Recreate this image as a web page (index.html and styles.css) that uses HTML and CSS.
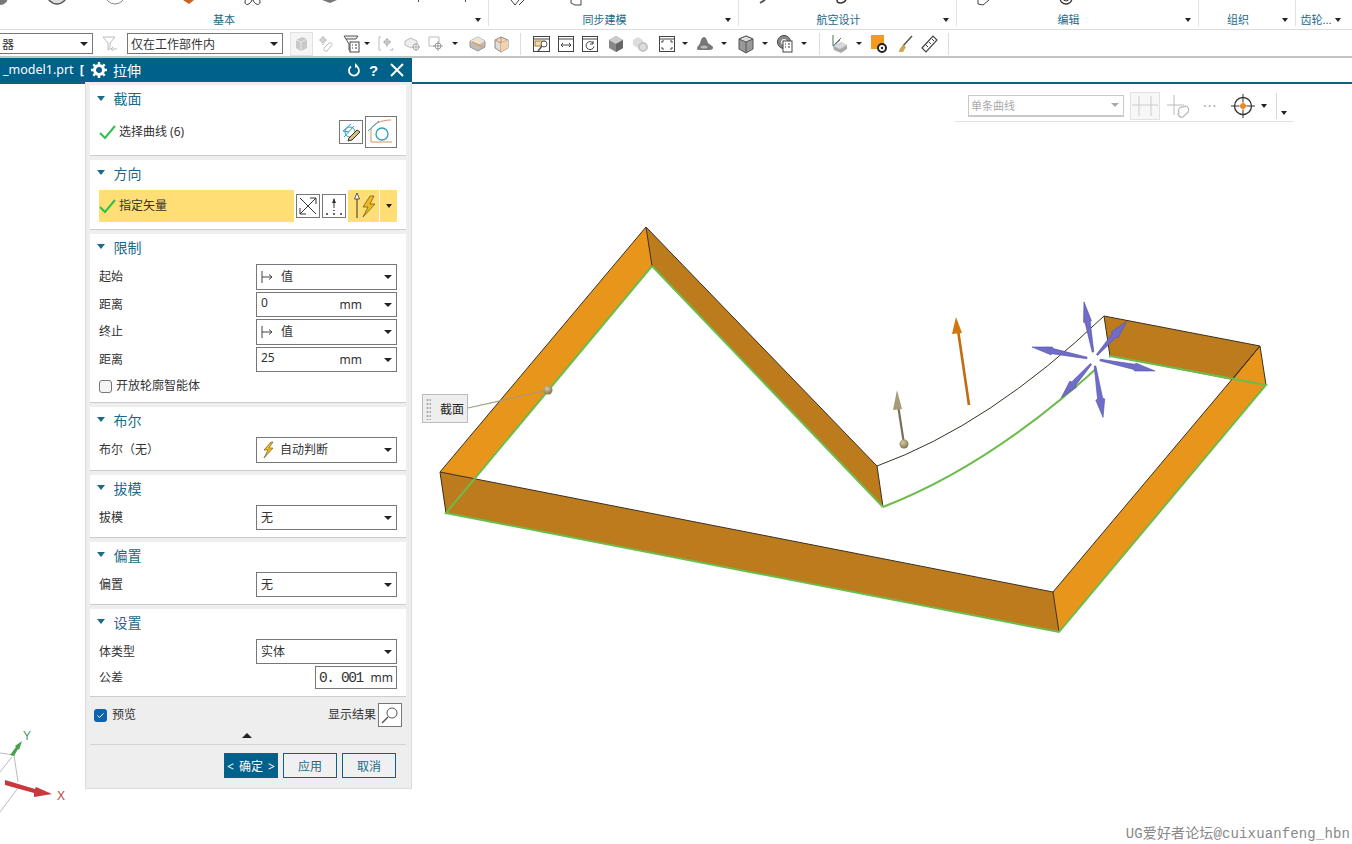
FILE: index.html
```html
<!DOCTYPE html>
<html lang="zh-CN">
<head>
<meta charset="utf-8">
<title>拉伸</title>
<link rel="stylesheet" href="styles.css">
</head>
<body>
<div class="app">
  <header class="ribbon">
    <section class="rgroup g1">
      <svg class="strip" width="488" height="8">
        <circle cx="0" cy="-3" r="8" fill="#777"/><circle cx="57" cy="-6" r="10" fill="#ddd" stroke="#555" stroke-width="1.4"/>
        <circle cx="115" cy="-6" r="10" fill="#fff" stroke="#888"/><path d="M183 0h11l-5 4z" fill="#c8641e"/>
        <path d="M252 0c-2 5-7 6-7 2 0-1 0-2 1-2M253 0c2 5 7 6 7 2 0-1 0-2-1-2" fill="none" stroke="#333"/>
        <path d="M322 0h15l-7 3z" fill="#777"/><path d="M418.500 0v2M465.500 0v2" stroke="#555"/>
      </svg>
      <div class="rlabel"><span>基本</span><i class="tri"></i></div>
    </section>
    <section class="rgroup g2">
      <svg class="strip" width="249" height="8">
        <path d="M22 0l4 5 4-5M30 5l5-5" fill="none" stroke="#444"/><path d="M82 0v3l4 2h6V0" fill="none" stroke="#444"/>
      </svg>
      <div class="rlabel"><span>同步建模</span><i class="tri"></i></div>
    </section>
    <section class="rgroup g3">
      <svg class="strip" width="217" height="8">
        <path d="M21 3l5-3" stroke="#555" stroke-width="2"/><path d="M98 0c0 4 6 4 9 0" fill="none" stroke="#333" stroke-width="1.500"/>
      </svg>
      <div class="rlabel"><span>航空设计</span><i class="tri"></i></div>
    </section>
    <section class="rgroup g4">
      <svg class="strip" width="242" height="8">
        <path d="M21 0v4l5 1 6-5" fill="none" stroke="#444"/><circle cx="109" cy="-2" r="6" fill="none" stroke="#333" stroke-width="1.300"/><circle cx="109" cy="-2" r="3" fill="none" stroke="#333"/>
      </svg>
      <div class="rlabel"><span>编辑</span><i class="tri"></i></div>
    </section>
    <section class="rgroup g5">
      <div class="rlabel labeled"><span>组织</span><i class="tri"></i></div>
    </section>
    <section class="rgroup g6">
      <div class="rlabel labeled"><span>齿轮...</span><i class="tri"></i></div>
    </section>
  </header>

  <nav class="toolbar">
    <div class="combo c1"><span class="cut">器</span><i class="tri"></i></div>
    <svg class="ic m9" width="16" height="20"><path d="M1 3h12l-5 6v6l-2 1V9z" fill="none" stroke="#bbb"/><path d="M10 15h5M11 13l-2 2 2 2" fill="none" stroke="#bbb"/></svg>
    <div class="combo c2"><span>仅在工作部件内</span><i class="tri"></i></div>
    <div class="dis m7"><svg width="15" height="18"><path d="M2 5l6-3 5 2v9l-6 3-5-3z" fill="#c8c8c8"/><path d="M2 5l5 2 6-3M7 7v9" fill="none" stroke="#e8e8e8"/></svg></div>
    <svg class="ic m5" width="16" height="20"><path d="M5 2v9M1 6h8" stroke="#bbb"/><circle cx="5" cy="6" r="2.500" fill="none" stroke="#bbb"/><path d="M7 13l4-4c3-1 4 2 2 3l-4 5c-3 1-4-2-2-4z" fill="none" stroke="#bbb"/></svg>
    <svg class="ic m9" width="17" height="20"><path d="M1 2h14l-2 3H3z M3 5l3 5v6h2" fill="#eee" stroke="#555"/><rect x="7" y="8" width="9" height="10" fill="#fff" stroke="#444"/><path d="M9 11h1M12 11h2M9 14h1M12 14h2" stroke="#333"/></svg>
    <i class="tri m4"></i>
    <svg class="ic m8" width="16" height="20"><path d="M3 3H1v13h2" fill="none" stroke="#bbb"/><path d="M9 4v9M5 8h8" stroke="#aaa"/><circle cx="9" cy="8" r="2.500" fill="none" stroke="#aaa"/><path d="M12 16h3l-1-2" fill="none" stroke="#bbb"/></svg>
    <svg class="ic m10" width="16" height="20"><path d="M1 7l6-3 6 3v4l-6 3-6-3z" fill="#eee" stroke="#bbb"/><circle cx="12" cy="13" r="3" fill="#fff" stroke="#aaa"/><path d="M12 9v8M8 13h8" stroke="#aaa"/></svg>
    <svg class="ic m8" width="17" height="20"><path d="M1 3h10v9H1z" fill="none" stroke="#bbb"/><circle cx="10" cy="12" r="3" fill="#fff" stroke="#999"/><path d="M10 7v10M5 12h10" stroke="#999"/></svg>
    <i class="tri m7"></i>
    <svg class="ic m11" width="17" height="20"><path d="M1 7l8-4 7 4v6l-7 4-8-4z" fill="#bdbdbd" stroke="#999"/><path d="M1 7l8 4 7-4-7-4z" fill="#ece4d6"/><path d="M3 8l11 5" stroke="#dda060" stroke-width="1.500"/></svg>
    <svg class="ic m7" width="17" height="20"><path d="M2 6l6-3 7 3v8l-7 4-6-4z" fill="#ddd" stroke="#888"/><path d="M8 3v15M2 6l6 3 7-3" fill="none" stroke="#d98a3a"/><path d="M8 9l7-3v8l-7 4z" fill="#f0d2b0"/></svg>
    <i class="sep m10"></i>
    <svg class="ic m12" width="17" height="20"><rect x=".5" y="2.500" width="16" height="15" fill="#fff" stroke="#444"/><path d="M1 5h15" stroke="#444"/><rect x="2" y="7" width="10" height="5" fill="#f4dca8" stroke="#a87a38"/><circle cx="11" cy="10" r="3" fill="#fff" stroke="#555"/><path d="M9 12l-4 5" stroke="#555" stroke-width="1.500"/></svg>
    <svg class="ic m8" width="16" height="20"><rect x=".5" y="2.500" width="15" height="15" fill="#fff" stroke="#444"/><path d="M1 5h14M3 11h10M5 9l-2 2 2 2M11 9l2 2-2 2" fill="none" stroke="#444"/></svg>
    <svg class="ic m8" width="16" height="20"><rect x=".5" y="2.500" width="15" height="15" fill="#fff" stroke="#444"/><path d="M1 5h14" stroke="#444"/><path d="M11.500 9.500a4 4 0 1 0 .5 3M11 7v3H8" fill="none" stroke="#444"/></svg>
    <svg class="ic m10" width="16" height="20"><path d="M1 6l7-4 7 4v8l-7 4-7-4z" fill="#888"/><path d="M1 6l7-4 7 4-7 4z" fill="#ccc"/><path d="M8 10v8l7-4V6z" fill="#666"/></svg>
    <svg class="ic m8" width="16" height="20"><path d="M1 6l5-3 5 3v5l-5 3-5-3z" fill="#ddd"/><circle cx="11" cy="13" r="4" fill="#ddd" stroke="#c4c4c4" stroke-width="2"/></svg>
    <svg class="ic m11" width="16" height="20"><rect x=".5" y="2.500" width="15" height="15" fill="#fff" stroke="#444"/><path d="M1 5h14M3 9V7h2M13 9V7h-2M3 13v2h2M13 13v2h-2" fill="none" stroke="#444"/></svg>
    <i class="tri m7"></i>
    <svg class="ic m8" width="18" height="20"><path d="M1 15c0-3 2-3 3-6 1-4 2-6 4-6 2 0 3 3 4 6l4 3c2 1 1 4-2 4H3c-2 0-2-1-2-1z" fill="#777"/><ellipse cx="8" cy="13" rx="3.500" ry="1.500" fill="#bbb"/></svg>
    <i class="tri m7"></i>
    <svg class="ic m11" width="16" height="20"><path d="M1 5l7-3 7 3v10l-7 4-7-4z" fill="#999" stroke="#555"/><path d="M1 5l7 3 7-3-7-3z" fill="#ddd" stroke="#555"/><path d="M8 8v11" stroke="#555"/></svg>
    <i class="tri m8"></i>
    <svg class="ic m9" width="16" height="20"><circle cx="7" cy="8" r="6.500" fill="#888" stroke="#444"/><circle cx="7" cy="8" r="3" fill="#eee"/><rect x="6" y="7" width="9" height="11" fill="#fff" stroke="#444"/><path d="M8 10h1M11 10h2M8 13h1M11 13h2" stroke="#333"/></svg>
    <i class="tri m8"></i>
    <i class="sep m12"></i>
    <svg class="ic m11" width="17" height="20"><path d="M2 12l8-4 6 3v4l-6 4-7-3z" fill="#aaa"/><path d="M2 12l8-4 6 3-7 4z" fill="#d8d8d8"/><path d="M2 1v11" stroke="#3a7d44"/><path d="M2 12L10 4" stroke="#c43a3a"/><path d="M2 12l7-6" stroke="#3a7bc8"/></svg>
    <i class="tri m8"></i>
    <svg class="ic m9" width="17" height="20"><rect x="0" y="1" width="13" height="14" fill="#f39a1f"/><circle cx="11" cy="14" r="4" fill="#fff" stroke="#222" stroke-width="2"/><circle cx="11" cy="14" r="1.200" fill="#222"/></svg>
    <svg class="ic m9" width="16" height="20"><path d="M15 2L6 12" stroke="#555" stroke-width="1.500"/><path d="M6 11l3 2-3 5H2c0-3 2-5 4-7z" fill="#c9a94a"/></svg>
    <svg class="ic m8" width="17" height="20"><path d="M1 14L12 2l4 4L5 18z" fill="#fff" stroke="#444" stroke-width="1.200"/><path d="M5 11l2 2M8 8l2 2M11 5l2 2" stroke="#444"/></svg>
    <i class="sep m10"></i>
  </nav>

  <div class="tabband">
    <div class="tab"><span>_model1.prt</span><b class="tabclip">[</b></div>
  </div>

  <main class="stage">
    <svg class="scene" viewBox="0 84 1352 760" width="1352" height="760">
      <defs>
        <radialGradient id="ball" cx="40%" cy="35%" r="70%"><stop offset="0" stop-color="#d6cba8"/><stop offset="1" stop-color="#7d7049"/></radialGradient>
      </defs>
      <polygon class="face-l" points="646,227 652,266 446,513 440,472"/>
      <polygon class="face-d" points="646,227 877,466 883,507 652,266"/>
      <polygon class="face-d" points="440,472 1053,592 1059,632 446,513"/>
      <polygon class="face-l" points="1053,592 1260,346 1266,385 1059,632"/>
      <polygon class="face-d" points="1104,316 1260,346 1232,380 1110,356"/>
      <path class="edge" d="M646 227L440 472L1053 592L1260 346L1104 316M646 227L877 466M646 227L652 266M440 472L446 513M1053 592L1059 632M1260 346L1266 385M1260 346L1232 380M877 466L883 507M1104 316L1110 356M877 466Q990 425 1104 316"/>
      <path class="green" d="M652 266L446 513L1059 632L1266 385L1110 356M883 507L652 266M883 507Q995 464 1110 356"/>
      <circle cx="1098" cy="358" r="11" fill="#fff"/>

      <g class="a-tan"><path d="M904 444L898 405" stroke="#77705c" stroke-width="2.200"/><polygon points="897,390 902,409 893,410"/></g>
      <circle cx="904" cy="444" r="4.500" fill="url(#ball)"/>
      <g class="a-orange"><path d="M969 405L958 330" stroke="#c46a10" stroke-width="2.600"/><polygon points="956,317 962,333 952,334"/></g>

      <g class="a-blue">
        <polygon transform="translate(1093 352) rotate(-100.200)" points="0,-.8 30,-2.600 31,-4 51,0 31,4 30,2.600 0,.8"/>
        <polygon transform="translate(1095 366) rotate(81.100)" points="0,-.8 33,-2.600 34,-4.500 52,0 34,4.500 33,2.600 0,.8"/>
        <polygon transform="translate(1087 358) rotate(191.300)" points="0,-.8 35,-2.600 36,-4 56,0 36,4 35,2.600 0,.8"/>
        <polygon transform="translate(1100 360) rotate(11.300)" points="0,-.8 35,-2.600 36,-4 56,0 36,4 35,2.600 0,.8"/>
        <polygon transform="translate(1097 355) rotate(-48.600)" points="0,-.8 26,-2.600 27,-4.500 45,0 27,4.500 26,2.600 0,.8"/>
        <polygon transform="translate(1091 364) rotate(131.400)" points="0,-.8 26,-2.600 27,-4.500 45,0 27,4.500 26,2.600 0,.8"/>
      </g>

      <path d="M468 408L548 390" stroke="#a09a7c" stroke-width="1.200"/>
      <circle cx="548" cy="390" r="4.500" fill="url(#ball)"/>

      <path d="M0 753L14 755L18 782M18 788L0 812M12 757L0 772" fill="none" stroke="#bbb"/>
      <polygon points="22,741 15,746 16,747 10,755 14,756 18,749 19,750" fill="#45a34f"/>
      <polygon points="5,780 5,785 34,793 34,797 52,794 36,787 35,789" fill="#c8383c"/>
      <text class="ax-y" x="23" y="740">Y</text>
      <text class="ax-x" x="57" y="800">X</text>
    </svg>

    <div class="callout"><i class="grip"></i><span>截面</span></div>

    <div class="snapbar">
      <div class="snapsel"><span>单条曲线</span><i class="tri tri-grey"></i></div>
      <div class="snapon"><svg width="30" height="28"><path d="M9 4v20M21 4v20M2 13h26" stroke="#ccc"/></svg></div>
      <svg class="snapic" width="26" height="26"><path d="M9 2v20M2 12h17" stroke="#bbb"/><path d="M14 20a4 4 0 0 1 4-6l3-1a4 4 0 0 1 2 6l-5 5a4 4 0 0 1-5-3z" fill="none" stroke="#bbb" stroke-width="1.300"/></svg>
      <span class="snapdots">···</span>
      <svg class="snapic target" width="24" height="24"><circle cx="12" cy="12" r="8.500" fill="#fff" stroke="#333" stroke-width="1.300"/><path d="M12 0v8M12 16v8M0 12h8M16 12h8" stroke="#333"/><path d="M12 8l4 4-4 4-4-4z" fill="#e88a2c"/></svg>
      <i class="tri"></i>
      <i class="sep snapsep"></i>
      <i class="tri snaptail"></i>
    </div>

    <div class="wmark">UG爱好者论坛@cuixuanfeng_hbn</div>
  </main>

  <aside class="dialog">
    <div class="dtitle">
      <svg width="16" height="16"><circle cx="8" cy="8" r="4.500" fill="none" stroke="#fff" stroke-width="3"/><path d="M8 0v3M8 13v3M0 8h3M13 8h3M2.300 2.300l2 2M11.700 11.700l2 2M13.700 2.300l-2 2M4.300 11.700l-2 2" stroke="#fff" stroke-width="2.400"/></svg>
      <span class="dname">拉伸</span>
      <svg class="dreset" width="14" height="14"><path d="M4 3.500a5 5 0 1 0 5-.5" fill="none" stroke="#fff" stroke-width="1.800"/><path d="M8 0v5l3-2z" fill="#fff"/></svg>
      <span class="dhelp">?</span>
      <svg class="dclose" width="14" height="14"><path d="M1 1l12 12M13 1L1 13" stroke="#fff" stroke-width="2"/></svg>
    </div>

    <section class="panel p71">
      <h3 class="phead"><i class="tri tri-blue"></i>截面</h3>
      <div class="row r34">
        <svg class="check" width="17" height="15"><path d="M1 8l5 5L16 1" fill="none" stroke="#2fc04a" stroke-width="2"/></svg>
        <span class="rtext">选择曲线 (6)</span>
        <button class="ib ib24 push"><svg width="22" height="22"><path d="M11 3L3 10l6 1M4 16l10-11" fill="none" stroke="#29a0c0"/><circle cx="10" cy="11" r="5" fill="none" stroke="#29a0c0"/><path d="M9 17l8-8 3 2-8 8-4 1z" fill="#d8c27a" stroke="#333"/></svg></button>
        <button class="ib ib32"><svg width="30" height="30"><path d="M5 25V12c2-5 10-9 20-9" fill="none" stroke="#d8925c"/><path d="M5 25h21" stroke="#d8925c"/><path d="M2 14l11-10" stroke="#29a0c0"/><circle cx="16" cy="17" r="6" fill="none" stroke="#29a0c0" stroke-width="1.300"/></svg></button>
      </div>
    </section>

    <section class="panel p70">
      <h3 class="phead"><i class="tri tri-blue"></i>方向</h3>
      <div class="row r32">
        <div class="vec">
          <svg class="check" width="17" height="15"><path d="M1 8l5 5L16 1" fill="none" stroke="#2fc04a" stroke-width="2"/></svg>
          <span class="rtext">指定矢量</span>
        </div>
        <button class="ib ib24 vb"><svg width="22" height="22"><path d="M3 19L19 3M3 3l16 16M19 3h-6M19 3v6M3 19h6M3 19v-6" fill="none" stroke="#333"/></svg></button>
        <button class="ib ib24 vb"><svg width="22" height="22"><path d="M11 4v9" stroke="#333"/><path d="M11 3l2 5H9z" fill="#333"/><path d="M3 19h2M10 19h2M17 19h2M11 15v1" stroke="#333" stroke-width="1.500"/></svg></button>
        <div class="vsplit">
          <div class="vmain"><svg width="30" height="32"><path d="M9 8v20" stroke="#333"/><path d="M9 3l2.500 6h-5z" fill="#fff" stroke="#333" stroke-width=".8"/><path d="M22 6l-7 11h5l-5 10 12-13h-5l4-8z" fill="#f2b81e" stroke="#6a6030" stroke-width=".8"/></svg></div>
          <div class="vdrop"><i class="tri"></i></div>
        </div>
      </div>
    </section>

    <section class="panel p170">
      <h3 class="phead"><i class="tri tri-blue"></i>限制</h3>
      <div class="row r26"><label>起始</label><div class="sel"><svg class="limit" width="14" height="14"><path d="M1 1v12M1 7h10M8 4.500L11 7l-3 2.500" fill="none" stroke="#444"/></svg><span class="grow">值</span><i class="tri"></i></div></div>
      <div class="row r25"><label>距离</label><div class="sel"><span class="grow up">0</span><span class="unit">mm</span><i class="tri"></i></div></div>
      <div class="row r26"><label>终止</label><div class="sel"><svg class="limit" width="14" height="14"><path d="M1 1v12M1 7h10M8 4.500L11 7l-3 2.500" fill="none" stroke="#444"/></svg><span class="grow">值</span><i class="tri"></i></div></div>
      <div class="row r25"><label>距离</label><div class="sel"><span class="grow up">25</span><span class="unit">mm</span><i class="tri"></i></div></div>
      <div class="row r24 chk"><i class="box"></i><span class="rtext">开放轮廓智能体</span></div>
    </section>

    <section class="panel p64">
      <h3 class="phead"><i class="tri tri-blue"></i>布尔</h3>
      <div class="row r26"><label>布尔（无）</label><div class="sel"><svg class="bolt" width="14" height="18"><path d="M10 1L3 9h4l-4 8 9-10H8l4-6z" fill="#f2b81e" stroke="#6a6030" stroke-width=".7"/></svg><span class="grow">自动判断</span><i class="tri"></i></div></div>
    </section>

    <section class="panel p63">
      <h3 class="phead"><i class="tri tri-blue"></i>拔模</h3>
      <div class="row r25"><label>拔模</label><div class="sel"><span class="grow">无</span><i class="tri"></i></div></div>
    </section>

    <section class="panel p63">
      <h3 class="phead"><i class="tri tri-blue"></i>偏置</h3>
      <div class="row r25"><label>偏置</label><div class="sel"><span class="grow">无</span><i class="tri"></i></div></div>
    </section>

    <section class="panel p88">
      <h3 class="phead"><i class="tri tri-blue"></i>设置</h3>
      <div class="row r25"><label>体类型</label><div class="sel"><span class="grow">实体</span><i class="tri"></i></div></div>
      <div class="row r23"><label>公差</label><div class="tol"><span class="tolv">0. 001</span><span class="unit">mm</span></div></div>
    </section>

    <div class="foot">
      <div class="prev">
        <i class="cb"><svg width="13" height="13"><path d="M3.500 6.500l2 2 4-4" fill="none" stroke="#fff"/></svg></i>
        <span class="rtext">预览</span>
        <span class="rtext push">显示结果</span>
        <button class="ib ib24 mag"><svg width="20" height="20"><circle cx="12" cy="8" r="5" fill="#fff" stroke="#555"/><path d="M8 12l-6 6" stroke="#555" stroke-width="1.500"/></svg></button>
      </div>
      <div class="more"><i class="tri tri-up"></i></div>
      <div class="btns">
        <button class="btn ok">&lt; 确定 &gt;</button>
        <button class="btn">应用</button>
        <button class="btn">取消</button>
      </div>
    </div>
  </aside>
</div>
</body>
</html>
```

FILE: styles.css
```css
* { box-sizing: border-box; }
html, body { margin: 0; padding: 0; background: #fff; }
body { font-family: "Noto Sans", "Noto Sans CJK SC", sans-serif; font-size: 12px; color: #333; overflow: hidden; }
.app { position: relative; width: 1352px; height: 844px; display: flex; flex-direction: column; overflow: hidden; }
i { display: block; flex: none; }

.tri { width: 0; height: 0; border-left: 4px solid transparent; border-right: 4px solid transparent; border-top: 4px solid #222; }
.tri-blue { border-top: 5px solid #1a6a8a; border-left-width: 4.500px; border-right-width: 4.500px; }
.tri-grey { border-top-color: #aaa; }
.tri-up { border-top: 0; border-bottom: 5px solid #222; border-left-width: 5px; border-right-width: 5px; }

.ribbon { height: 30px; display: flex; border-bottom: 1px solid #ddd; flex: none; }
.rgroup { border-right: 1px solid #e2e2e2; height: 26px; position: relative; flex: none; padding-right: 18px; }
.g1 { width: 489px; padding-right: 40px; }
.g2 { width: 250px; }
.g3 { width: 218px; }
.g4 { width: 242px; }
.g5 { width: 97px; }
.g6 { width: 56px; border-right: 0; padding-right: 16px; }
.strip { display: block; height: 8px; }
.rlabel { height: 18px; margin-top: 3px; display: flex; align-items: center; justify-content: center; color: #1a6a8a; font-size: 11px; line-height: 14px; }
.labeled { margin-top: 11px; }
.rlabel .tri { position: absolute; right: 7px; top: 18px; border-left-width: 3.500px; border-right-width: 3.500px; }
.g6 .rlabel .tri { right: 11px; }

.toolbar { height: 28px; display: flex; align-items: center; flex: none; padding-top: 1px; border-bottom: 2px solid #c4c4c4; }
.ic { display: block; flex: none; }
.toolbar > .tri { border-left-width: 3px; border-right-width: 3px; border-top-width: 3.500px; width: 6px; }
.m4 { margin-left: 4px; } .m5 { margin-left: 5px; } .m7 { margin-left: 7px; } .m8 { margin-left: 8px; } .m9 { margin-left: 9px; }
.m10 { margin-left: 10px; } .m11 { margin-left: 11px; } .m12 { margin-left: 12px; }
.combo { height: 21px; border: 1px solid #777; background: #fff; display: flex; align-items: center; justify-content: space-between; padding: 0 4px 0 3px; flex: none; font-size: 12px; overflow: hidden; }
.c1 { width: 93px; border-left: 0; padding-left: 0; }
.c2 { width: 156px; margin-left: 9px; }
.cut { margin-left: 2px; }
.dis { width: 23px; height: 24px; background: #f5f5f5; border: 1px solid #e2e2e2; display: flex; align-items: center; justify-content: center; flex: none; }
.sep { width: 1px; height: 22px; background: #ddd; flex: none; }

.tabband { height: 26px; flex: none; border-bottom: 2px solid #135f80; }
.tab { width: 90px; height: 24px; background: #00618a; color: #fff; font-size: 12.500px; line-height: 24px; padding-left: 3px; display: flex; }
.tabclip { margin-left: 6px; font-weight: 700; }

.stage { position: relative; flex: 1; }
.scene { position: absolute; left: 0; top: 0; display: block; }
.face-l { fill: #e8951b; }
.face-d { fill: #bc7c1e; }
.edge { fill: none; stroke: #3a3020; stroke-width: 1; }
.green { fill: none; stroke: #6cbc4c; stroke-width: 2; }
.a-tan polygon { fill: #a79a76; }
.a-orange polygon { fill: #d2760f; }
.a-blue polygon { fill: #6f6dc8; stroke: #5453ad; stroke-width: .6; }
.ax-y { fill: #3f9a58; font-size: 12px; font-family: "Liberation Sans", sans-serif; }
.ax-x { fill: #c04444; font-size: 12px; font-family: "Liberation Sans", sans-serif; }

.callout { position: absolute; left: 422px; top: 310px; width: 46px; height: 29px; background: #eee; border: 1px solid #bbb; display: flex; align-items: center; padding-left: 3px; font-size: 12px; color: #222; overflow: hidden; }
.grip { width: 5px; height: 22px; margin-right: 9px; background-image: radial-gradient(circle, #aaa 1px, transparent 1.200px); background-size: 3px 4px; }

.snapbar { position: absolute; left: 955px; top: 6px; width: 339px; height: 32px; border-bottom: 1px solid #e2e2e2; display: flex; align-items: center; padding-left: 13px; }
.snapsel { width: 156px; height: 22px; border: 1px solid #c8c8c8; border-bottom-width: 2px; display: flex; align-items: center; justify-content: space-between; padding: 0 4px 0 2px; color: #aaa; font-size: 11px; }
.snapon { width: 30px; height: 28px; margin-left: 6px; background: #f7f7f7; border: 1px solid #e2e2e2; }
.snapon svg { display: block; margin: -1px; }
.snapic { display: block; flex: none; margin-left: 5px; }
.snapdots { width: 18px; margin-left: 12px; color: #aaa; font-size: 14px; letter-spacing: 1px; text-align: left; }
.target { margin-left: 10px; }
.snapbar > .tri { margin-left: 6px; border-left-width: 3px; border-right-width: 3px; }
.snapsep { margin-left: 9px; height: 26px; background: #d8d8d8; }
.snapbar > .snaptail { margin-left: 4px; margin-top: 14px; }

.wmark { position: absolute; right: 2px; bottom: 2px; color: #888; font-family: "Liberation Mono", "Noto Sans CJK SC", monospace; font-size: 14px; letter-spacing: .13px; }

.dialog { position: absolute; left: 85px; top: 58px; width: 327px; height: 731px; background: #eee; border: 1px solid #dcdcdc; border-top: 0; display: flex; flex-direction: column; }
.dtitle { height: 24px; margin: 0 -1px; background: #00618a; display: flex; align-items: center; padding-left: 6px; color: #fff; flex: none; }
.dname { margin-left: 6px; font-size: 14px; flex: none; white-space: nowrap; }
.dreset { margin-left: 206px; flex: none; }
.dhelp { margin-left: 8px; width: 10px; flex: none; font: 700 15px "Liberation Sans", sans-serif; }
.dclose { margin-left: 11px; flex: none; }

.panel { margin: 4px 5px 0 4px; background: #fff; border-bottom: 1px solid #ccc; padding: 0 9px; flex: none; }
.dtitle + .panel { margin-top: 3px; }
.p71 { height: 71px; }
.p70 { height: 70px; }
.p170 { height: 169px; }
.p64 { height: 64px; }
.p63 { height: 63px; }
.p88 { height: 88px; }
.phead { height: 25px; margin: 0 0 5px -2px; display: flex; align-items: center; gap: 8.500px; font-size: 14px; font-weight: 400; color: #1a6a8a; }
.dtitle + .panel .phead { height: 26px; margin-bottom: 4px; }
.row { display: flex; align-items: center; justify-content: space-between; margin-bottom: 2px; }
.r34 { height: 34px; justify-content: flex-start; }
.r32 { height: 32px; justify-content: flex-start; }
.r26 { height: 26px; }
.r25 { height: 25px; }
.r24 { height: 24px; }
.r23 { height: 23px; }
.rtext { font-size: 12px; line-height: 16px; color: #333; }
label { font-size: 12px; color: #333; padding-bottom: 2px; }
.check { display: block; flex: none; margin-right: 3px; }
.push { margin-left: auto; }
.ib { width: 24px; height: 24px; padding: 0; border: 1px solid #777; background: #fff; display: flex; align-items: center; justify-content: center; flex: none; }
.ib svg { display: block; flex: none; }
.ib32 { width: 32px; height: 32px; margin-left: 2px; }
.vec { width: 195px; height: 32px; background: #ffde75; display: flex; align-items: center; flex: none; color: #222; }
.vb { margin-left: 2px; }
.vsplit { display: flex; margin-left: 2px; height: 32px; }
.vmain { width: 31px; background: #ffde75; }
.vmain svg { display: block; }
.vdrop { width: 17px; margin-left: 1px; background: #ffde75; display: flex; align-items: center; justify-content: center; }
.vdrop .tri { border-left-width: 3px; border-right-width: 3px; }

.sel { width: 141px; height: 100%; border: 1px solid #777; background: #fff; display: flex; align-items: center; padding: 0 4px 0 4px; font-size: 12px; color: #333; }
.grow { flex: 1; padding-bottom: 2px; }
.up { margin-top: -2px; }
.unit { font-size: 12px; margin-right: 22px; }
.limit { display: block; margin-right: 6px; }
.bolt { display: block; margin-right: 5px; }
.chk { justify-content: flex-start; gap: 4px; }
.box { width: 13px; height: 13px; border: 1px solid #777; border-radius: 3px; background: #f4f4f4; }
.tol { width: 82px; height: 100%; border: 1px solid #777; display: flex; align-items: center; justify-content: space-between; padding: 0 3px 0 3px; background: #fff; }
.tolv { font: 14.500px "Liberation Mono", monospace; color: #333; letter-spacing: -1.400px; white-space: pre; }
.tol .unit { margin-right: 0; }

.foot { flex: 1; padding: 0 5px 0 4px; display: flex; flex-direction: column; }
.prev { display: flex; align-items: center; height: 24px; margin-top: 6px; padding: 0 4px; }
.cb { width: 13px; height: 13px; border-radius: 3px; background: #0d62b0; margin-right: 5px; }
.cb svg { display: block; }
.mag { margin-left: 2px; }
.more { height: 18px; padding-right: 3px; border-bottom: 1px solid #d4d4d4; display: flex; justify-content: center; align-items: center; }
.btns { display: flex; justify-content: flex-end; gap: 5px; padding: 8px 10px 0 0; }
.btn { width: 54px; height: 25px; border: 1px solid #135f80; background: #f0f0f0; color: #1a6a8a; font-size: 12px; font-family: inherit; padding: 0; }
.ok { background: #00618a; color: #fff; word-spacing: 2px; }
```
